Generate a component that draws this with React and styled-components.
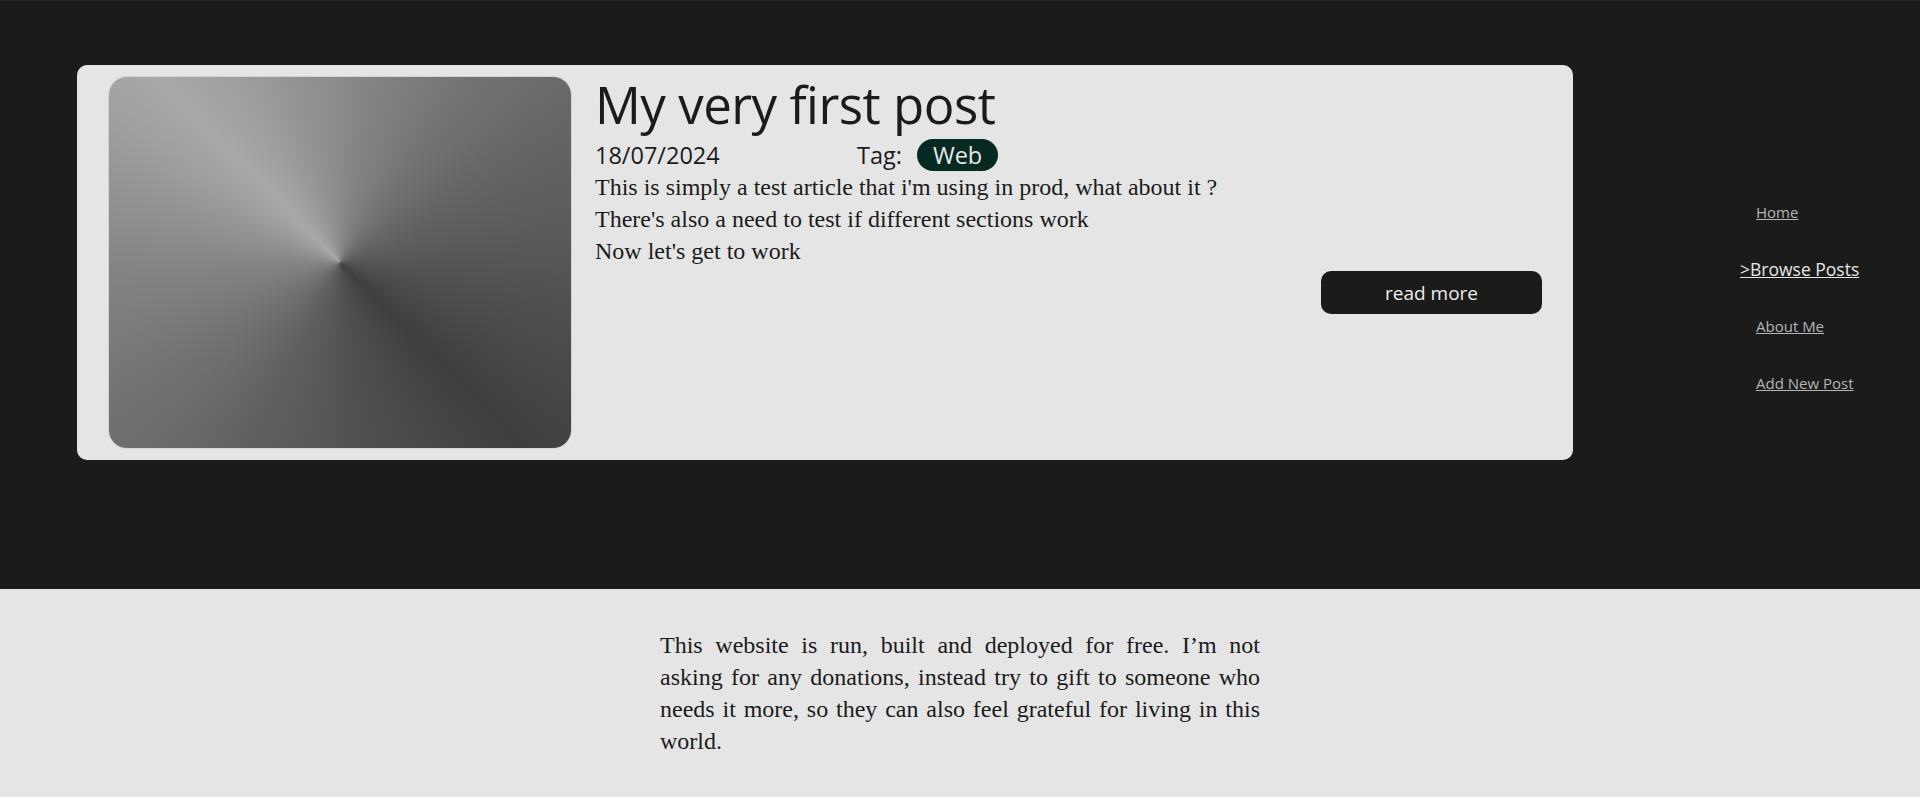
import React from "react";
import styled, { createGlobalStyle } from "styled-components";

const GlobalStyle = createGlobalStyle`
  html, body {
    margin: 0;
    padding: 0;
    background-color: #1b1b1b;
  }
  * {
    box-sizing: border-box;
  }
`;

const Page = styled.div`
  width: 100%;
  min-height: 797px;
  display: flex;
  flex-direction: column;
  background-color: #1b1b1b;
`;

const Main = styled.main`
  height: 589px;
  display: flex;
  align-items: flex-start;
  border-top: 1px solid #2a2a2a;
`;

const Posts = styled.section`
  width: 1680px;
  padding: 64px 107px 0 77px;
`;

const Card = styled.article`
  width: 100%;
  height: 395px;
  display: flex;
  gap: 24px;
  padding: 12px 31px 12px 32px;
  background-color: #e5e5e5;
  border-radius: 10px;
`;

const Thumb = styled.div`
  flex: 0 0 462px;
  height: 371px;
  border-radius: 18px;
  background: conic-gradient(
    from 315deg at 50% 50%,
    #a9a9a9 0deg,
    #8a8a8a 45deg,
    #676767 100deg,
    #3f3f3f 180deg,
    #5f5f5f 250deg,
    #858585 315deg,
    #a9a9a9 360deg
  );
  box-shadow: 0 0 0 1px rgba(0, 0, 0, 0.08);
`;

const Body = styled.div`
  flex: 1;
  display: flex;
  flex-direction: column;
`;

const Title = styled.h1`
  margin: -8px 0 0;
  font-family: "Open Sans", "Noto Sans", sans-serif;
  font-weight: 400;
  font-size: 51px;
  line-height: 70px;
  color: #1b1b1b;
  letter-spacing: -0.5px;
`;

const Meta = styled.div`
  display: flex;
  align-items: center;
  height: 32px;
  font-family: "Open Sans", "Noto Sans", sans-serif;
  font-size: 23.5px;
  line-height: 32px;
  color: #1b1b1b;
`;

const Date = styled.span`
  width: 262px;
`;

const TagLabel = styled.span`
  margin-right: 15px;
`;

const Tag = styled.span`
  display: inline-flex;
  align-items: center;
  height: 32px;
  padding: 0 16px;
  border-radius: 16px;
  background-color: #062a22;
  color: #e8e8e8;
`;

const Row = styled.div`
  display: flex;
  justify-content: space-between;
  align-items: flex-start;
`;

const Excerpt = styled.div`
  font-family: "Liberation Serif", "Times New Roman", serif;
  font-size: 24px;
  line-height: 32px;
  color: #1b1b1b;
  p {
    margin: 0;
  }
`;

const ReadMore = styled.button`
  margin-top: 100px;
  width: 221px;
  height: 43px;
  border: none;
  border-radius: 10px;
  background-color: #1b1b1b;
  color: #eeeeee;
  font-family: "Open Sans", "Noto Sans", sans-serif;
  font-size: 19px;
  cursor: pointer;
`;

const Nav = styled.nav`
  flex: 1;
  display: flex;
  flex-direction: column;
  align-items: flex-start;
  padding: 199px 0 0 60px;
  gap: 33px;
`;

const NavLink = styled.a`
  font-family: "Open Sans", "Noto Sans", sans-serif;
  font-size: ${(p) => (p.$active ? "17.5px" : "15px")};
  line-height: 24px;
  color: ${(p) => (p.$active ? "#e6e6e6" : "#b5b5b5")};
  text-decoration: underline;
  margin-left: ${(p) => (p.$active ? "0" : "16px")};
  cursor: pointer;
`;

const Footer = styled.footer`
  flex: 1;
  min-height: 208px;
  background-color: #e5e5e5;
  display: flex;
  justify-content: center;
  padding-top: 40px;
`;

const FooterText = styled.p`
  width: 600px;
  margin: 0;
  font-family: "Liberation Serif", "Times New Roman", serif;
  font-size: 24px;
  line-height: 32px;
  text-align: justify;
  color: #1b1b1b;
`;

const post = {
  title: "My very first post",
  date: "18/07/2024",
  tag: "Web",
  lines: [
    "This is simply a test article that i'm using in prod, what about it ?",
    "There's also a need to test if different sections work",
    "Now let's get to work",
  ],
};

const links = [
  { label: "Home" },
  { label: ">Browse Posts", active: true },
  { label: "About Me" },
  { label: "Add New Post" },
];

const App = () => {
  return (
    <>
      <GlobalStyle />
      <Page>
        <Main>
          <Posts>
            <Card>
              <Thumb />
              <Body>
                <Title>{post.title}</Title>
                <Meta>
                  <Date>{post.date}</Date>
                  <TagLabel>Tag:</TagLabel>
                  <Tag>{post.tag}</Tag>
                </Meta>
                <Row>
                  <Excerpt>
                    {post.lines.map((line) => (
                      <p key={line}>{line}</p>
                    ))}
                  </Excerpt>
                  <ReadMore>read more</ReadMore>
                </Row>
              </Body>
            </Card>
          </Posts>
          <Nav>
            {links.map((l) => (
              <NavLink key={l.label} $active={l.active}>
                {l.label}
              </NavLink>
            ))}
          </Nav>
        </Main>
        <Footer>
          <FooterText>
            This website is run, built and deployed for free. I’m not asking
            for any donations, instead try to gift to someone who needs it
            more, so they can also feel grateful for living in this world.
          </FooterText>
        </Footer>
      </Page>
    </>
  );
};

export default App;
